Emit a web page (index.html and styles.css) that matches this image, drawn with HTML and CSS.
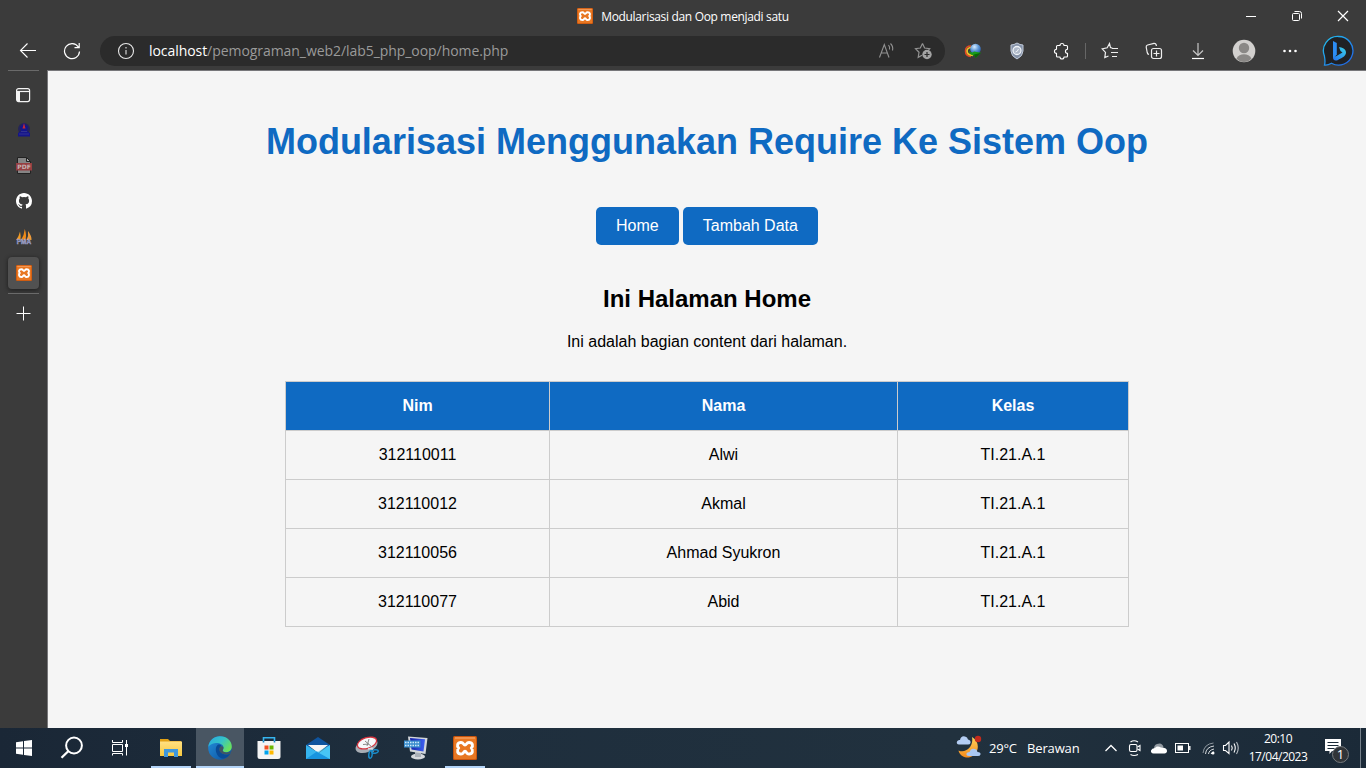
FILE: index.html
```html
<!DOCTYPE html>
<html lang="id">
<head>
<meta charset="utf-8">
<title>Modularisasi dan Oop menjadi satu</title>
<link rel="stylesheet" href="styles.css">
</head>
<body>
<svg width="0" height="0" class="defs">
  <defs>
    <symbol id="xampp" viewBox="0 0 24 24">
      <rect width="24" height="24" rx="1.5" fill="#c9540c"/>
      <rect x="1" y="1" width="22" height="22" rx="1" fill="#e87722"/>
      <rect x="2" y="1.3" width="20" height="1.4" fill="#f5a060"/>
      <path d="M8 6.500C4.200 6.500 3.600 10 5.700 12C3.600 14 4.200 18 8 18C10.800 18 10.300 15.300 12 15.300C13.700 15.300 13.200 18 16 18C19.800 18 20.400 14 18.300 12C20.400 10 19.800 6.500 16 6.500C13.200 6.500 13.700 9 12 9C10.300 9 10.800 6.500 8 6.500Z" fill="none" stroke="#fff" stroke-width="2.900" stroke-linejoin="round"/>
    </symbol>
    <linearGradient id="edgeA" x1="0" y1="0" x2="1" y2="0.6"><stop offset="0" stop-color="#2aa9e0"/><stop offset=".55" stop-color="#35c3c8"/><stop offset="1" stop-color="#6be05a"/></linearGradient>
    <linearGradient id="edgeB" x1="0" y1="0" x2="1" y2="1"><stop offset="0" stop-color="#2490dc"/><stop offset="1" stop-color="#0c4f9c"/></linearGradient>
    <linearGradient id="bing" x1="0" y1="0" x2="1" y2="1"><stop offset="0" stop-color="#22c3ee"/><stop offset="1" stop-color="#2160e8"/></linearGradient>
    <linearGradient id="bingTail" x1="0" y1="1" x2="1" y2="0"><stop offset="0" stop-color="#2470ee"/><stop offset="1" stop-color="#39d3e8"/></linearGradient>
    <linearGradient id="folder" x1="0" y1="0" x2="0" y2="1"><stop offset="0" stop-color="#ffe083"/><stop offset="1" stop-color="#f8c93f"/></linearGradient>
    <linearGradient id="moon" x1="0" y1="0" x2="0" y2="1"><stop offset="0" stop-color="#ffd35c"/><stop offset="1" stop-color="#f38a1c"/></linearGradient>
    <linearGradient id="screen" x1="0" y1="0" x2="1" y2="0"><stop offset="0" stop-color="#1321a8"/><stop offset="1" stop-color="#3f62f0"/></linearGradient>
    <radialGradient id="globe" cx=".4" cy=".3" r=".8"><stop offset="0" stop-color="#d5ecff"/><stop offset=".5" stop-color="#5b95d6"/><stop offset="1" stop-color="#1d4c99"/></radialGradient>
  </defs>
</svg>

<header class="titlebar">
  <div class="caption"><svg width="16" height="16"><use href="#xampp"/></svg><span class="caption-text">Modularisasi dan Oop menjadi satu</span></div>
  <div class="window-controls">
    <span><svg width="12" height="12" fill="none" stroke="#fff"><path d="M1 6.500H11"/></svg></span>
    <span><svg width="12" height="12" fill="none" stroke="#fff"><rect x="1.500" y="3.500" width="7" height="7" rx="1"/><path d="M3.500 1.500H8.500Q10.500 1.500 10.500 3.500V8.500"/></svg></span>
    <span><svg width="12" height="12" fill="none" stroke="#fff" stroke-width="1.200"><path d="M1 1L11 11M11 1L1 11"/></svg></span>
  </div>
</header>

<nav class="toolbar">
  <span class="tool"><svg width="18" height="18" fill="none" stroke="#fff" stroke-width="1.100"><path d="M17 8.500H1.500M8.500 1.500L1.500 8.500L8.500 15.500"/></svg></span>
  <span class="tool"><svg width="18" height="18" fill="none" stroke="#fff" stroke-width="1.200"><path d="M15.300 5A7.500 7.500 0 1 0 16.500 9.500M16.200 1V5.600H11.500"/></svg></span>
  <div class="address">
    <svg width="18" height="18" fill="none" stroke="#e8e8e8"><circle cx="9" cy="9" r="7.500" stroke-width="1.100"/><path d="M9 8V12.500M9 5V6.500" stroke-width="1.600" stroke="#aaa"/></svg>
    <span class="url"><b>localhost</b>/pemograman_web2/lab5_php_oop/home.php</span>
    <svg class="read" width="18" height="18" fill="none" stroke="#929292"><path d="M1.500 15.500L6.300 2.500L11 15.500M3 11H9.500M10.500 3Q12.200 5 11.500 7.500M12.500 1.500Q15.500 4.500 14.500 8.500" stroke-width="1.100"/></svg>
    <svg class="add-star" width="18" height="18"><path d="M8.500 1.500L10.600 6L15.700 6.700L14.500 8M8.500 1.500L6.300 6L1.500 6.700L5 10.300L4.200 15.400L8 13.300" fill="none" stroke="#929292" stroke-width="1.200"/><circle cx="13" cy="12.500" r="4.700" fill="#a3a3a3"/><path d="M13 10V15M10.500 12.500H15.500" stroke="#2b2b2b" stroke-width="1.200"/></svg>
  </div>
  <span class="tool"><svg width="18" height="18"><path d="M7 4Q1.500 4 1.500 9Q1.500 14 7 14.500" fill="none" stroke="#e24a25" stroke-width="1.600"/><path d="M7 5.500Q3 6 3 9Q3 13 9 13.500" fill="none" stroke="#edc52a" stroke-width="1.700"/><circle cx="11.500" cy="7" r="5.300" fill="url(#globe)"/><path d="M4.500 8.500Q8 12 10 9.500L17 10.800L11.500 16L10.500 13.500Q6 13.500 4.500 8.500Z" fill="#199c18"/><path d="M10 12.500L17 10.800L11.500 16Z" fill="#0b620a"/></svg></span>
  <span class="tool"><svg width="16" height="18"><path d="M8 1Q11 3 14 3V9Q14 14 8 17Q2 14 2 9V3Q5 3 8 1Z" fill="#8491a7" stroke="#c1cad9"/><circle cx="8" cy="8.500" r="4" fill="#aeb8c8" stroke="#eef2f7" stroke-width="1.300"/><path d="M6.500 10Q8.500 10 9.500 7" stroke="#eef2f7" fill="none"/></svg></span>
  <span class="tool"><svg width="18" height="18" fill="none" stroke="#fff" stroke-width="1.100"><path d="M5.500 3.500H8A2 2 0 0 1 12 3.500H14.500Q15.500 3.500 15.500 4.500V7.200A2 2 0 0 0 15.500 11.300V14Q15.500 15 14.500 15H12A2 2 0 0 1 8 15H5.500Q4.500 15 4.500 14V11.300A2 2 0 0 1 4.500 7.200V4.500Q4.500 3.500 5.500 3.500Z" stroke-linejoin="round"/></svg></span>
  <span class="divider"></span>
  <span class="tool"><svg width="18" height="18" fill="none" stroke="#eee" stroke-width="1.200"><path d="M11.500 6.200L9.500 5.600L8.500 1.500L6.200 5.800L1.200 6.800L4.500 10.400L3.800 15.600L7.500 14M11 6.500H17M10 10.500H17M11 14.500H16"/></svg></span>
  <span class="tool"><svg width="18" height="18" fill="none" stroke="#eee" stroke-width="1.200"><rect x="6.500" y="6.500" width="10" height="10" rx="2"/><path d="M11.500 8.500V14.500M8.500 11.500H14.500M4 12.500Q2.600 12.200 2.200 10.500L1.200 5.200Q1 3.500 2.600 3L9 1.300Q10.800 1.200 11.300 3V4"/></svg></span>
  <span class="tool"><svg width="14" height="18" fill="none" stroke="#c6c6c6" stroke-width="1.200"><path d="M7 1V13.500M2 8.500L7 13.500L12 8.500"/><path d="M1 16.500H13" stroke="#fff"/></svg></span>
  <span class="tool avatar"><svg width="24" height="24"><circle cx="12" cy="12" r="11.300" fill="#d2d0ce"/><circle cx="12" cy="9" r="5.200" fill="#8a8886"/><path d="M4.500 19.500Q7 15.300 12 15.300Q17 15.300 19.500 19.500Q16.500 23 12 23Q7.500 23 4.500 19.500Z" fill="#8a8886"/></svg></span>
  <span class="tool"><svg width="16" height="6" fill="#fff"><circle cx="2.500" cy="3" r="1.300"/><circle cx="8" cy="3" r="1.300"/><circle cx="13.500" cy="3" r="1.300"/></svg></span>
  <span class="tool bing"><svg width="32" height="32"><path d="M16.500 1.500A14.300 14.300 0 1 1 9.500 28.200Q5.500 30.500 2.500 30Q3.500 27 2.400 21A14.300 14.300 0 0 1 16.500 1.500Z" fill="#202124" stroke="url(#bing)" stroke-width="1.300"/><path d="M11 6L14.800 8V19.500L11 24Z" fill="#2c8df5"/><path d="M11 22Q11 26 14.500 25.500Q16 25.200 22 21.500Q25 18.500 23.500 15.500Q22 12.500 17 12L18.500 16L20.500 17.500L14.500 21Z" fill="url(#bingTail)"/></svg></span>
</nav>

<div class="workspace">
  <aside class="tabs">
    <span class="rule"></span>
    <span class="tab first"><svg width="16" height="16" fill="none" stroke="#f4f4f4" stroke-width="1.200"><rect x="1.600" y="1.600" width="13" height="13" rx="2"/><path d="M2 4.500H14.500"/><path d="M3.500 5V14" stroke-width="3"/></svg></span>
    <span class="tab crest"><svg width="16" height="16"><circle cx="8" cy="8" r="6" fill="#252558"/><path d="M8 2L12 6L11 10L14 12V15.500H2V12L5 10L4 6Z" fill="#15158a"/><path d="M8 2L9.500 7.500H6.500Z" fill="#c62a32"/><path d="M3 13H13M5 10.500H11" stroke="#33338f"/></svg></span>
    <span class="tab pdf"><svg width="16" height="17"><path d="M1.500 .5H10.500L14.500 4.500V16.500H1.500Z" fill="#858585" stroke="#222"/><path d="M10.500 .5V4.500H14.500Z" fill="#aaa" stroke="#222"/><rect y="6" width="16" height="7.500" fill="#963f42"/><text x="8" y="11.900" text-anchor="middle" class="pdf-label">PDF</text></svg></span>
    <span class="tab"><svg width="16" height="16" viewBox="0 0 16 16"><path fill="#fff" d="M8 0C3.580 0 0 3.580 0 8c0 3.540 2.290 6.530 5.470 7.590.4.070.55-.17.55-.38v-1.340c-2.230.48-2.700-1.070-2.700-1.070-.36-.92-.89-1.170-.89-1.170-.73-.5.050-.49.050-.49.810.06 1.230.83 1.230.83.720 1.230 1.880.87 2.340.67.070-.52.280-.88.510-1.080-1.780-.2-3.640-.89-3.640-3.950 0-.87.310-1.590.82-2.150-.08-.2-.36-1.020.08-2.120 0 0 .67-.21 2.200.82a7.600 7.600 0 0 1 4 0c1.530-1.040 2.200-.82 2.200-.82.440 1.100.16 1.920.08 2.120.51.560.82 1.270.82 2.150 0 3.070-1.870 3.750-3.650 3.950.29.250.54.730.54 1.480v2.200c0 .21.150.46.550.38A8 8 0 0 0 16 8c0-4.420-3.580-8-8-8z"/></svg></span>
    <span class="tab"><svg width="18" height="18"><path d="M5 3.500Q6 8 5.500 12H1.200Q4 8 5 3.500Z" fill="#f29a22"/><path d="M9.800 1Q11.800 7 10.500 12H6Q9.300 7 9.800 1Z" fill="#f08b18"/><path d="M13 3Q16.800 8 16.500 12H11.500Q13.800 8 13 3Z" fill="#ef9b3a"/><text x="9" y="16.300" text-anchor="middle" class="pma-label">PMA</text></svg></span>
    <span class="tab"><span class="active-tab"><svg width="16" height="16"><use href="#xampp"/></svg></span></span>
    <span class="rule lower"></span>
    <span class="new-tab"><svg width="16" height="16" stroke="#fff"><path d="M7.500 .5V14.500M.5 7.500H14.500"/></svg></span>
  </aside>

  <main class="page">
    <h1>Modularisasi Menggunakan Require Ke Sistem Oop</h1>
    <div class="menu"><a class="button">Home</a><a class="button">Tambah Data</a></div>
    <h2>Ini Halaman Home</h2>
    <p>Ini adalah bagian content dari halaman.</p>
    <table>
      <colgroup><col class="nim"><col class="nama"><col class="kelas"></colgroup>
      <thead><tr><th>Nim</th><th>Nama</th><th>Kelas</th></tr></thead>
      <tbody>
        <tr><td>312110011</td><td>Alwi</td><td>TI.21.A.1</td></tr>
        <tr><td>312110012</td><td>Akmal</td><td>TI.21.A.1</td></tr>
        <tr><td>312110056</td><td>Ahmad Syukron</td><td>TI.21.A.1</td></tr>
        <tr><td>312110077</td><td>Abid</td><td>TI.21.A.1</td></tr>
      </tbody>
    </table>
  </main>
</div>

<footer class="taskbar">
  <span class="task"><svg width="16" height="16" fill="#fff"><path d="M0 2.300L7 1.300V7.500H0ZM8 1.100L16 0V7.500H8ZM0 8.500H7V14.700L0 13.700ZM8 8.500H16V16L8 14.900Z"/></svg></span>
  <span class="task"><svg width="24" height="24" fill="none" stroke="#fff" stroke-width="2"><circle cx="14" cy="9.500" r="7.900"/><path d="M8.500 15L1.500 21.800" stroke-width="2.300"/></svg></span>
  <span class="task"><svg width="18" height="16" fill="none" stroke="#fff"><path d="M1.500 0V2.500H11.500V0M1.500 15.500V13.500H11.500V15.500M1.500 4.500H11.500V11.500H1.500ZM15.500 0V15.500"/><rect x="14" y="4" width="3" height="3" fill="#fff" stroke="none"/></svg></span>
  <span class="task explorer"><svg width="24" height="20"><path d="M1 1H9L11 3H22V10H1Z" fill="#e2a115"/><path d="M1 3.500H23V18H1Z" fill="url(#folder)"/><path d="M5 11H19V19H15V14.500H9V19H5Z" fill="#3f97dc"/></svg></span>
  <span class="task focused"><svg width="24" height="24"><circle cx="12" cy="12" r="11.800" fill="url(#edgeB)"/><path d="M.3 11C1 4 6.500 .2 12 .2C19 .2 24 5 23.800 11C23.500 16 18 17.500 15 15.500C14 14.500 15.500 13.500 15.500 11.500C15.500 8.500 11.500 6.800 8 7C4 7.300 1 9.500 .3 11Z" fill="url(#edgeA)"/><path d="M9.500 9C6 12 8 21 14 22.500C17.500 23 21 20 22 17.800C18.500 20 13.500 18.500 11.800 15C10.800 13 11.500 11 13.500 10C12.500 8.600 11 8.200 9.500 9Z" fill="#0a4b96"/><path d="M12 11C13.500 9.500 16 10.500 15.400 12.500C15 14 14 14.500 15.200 15.600C18 17.500 21 16.500 22.500 15.500V17.500C17 20 12 17 11.400 14.500C11.200 13 11.400 12 12 11Z" fill="#405563"/></svg></span>
  <span class="task"><svg width="24" height="24"><path d="M6.500 6V1.700H17.500V6" fill="none" stroke="#36b5ef" stroke-width="1.600"/><path d="M.5 5H23.500V20.500Q23.500 23 21 23H3Q.5 23 .5 20.500Z" fill="#f4f4f4"/><path d="M6.500 5V6.500M17.500 5V6.500" stroke="#1688c6" stroke-width="1.600"/><path d="M7.500 9.500H11.500V13.500H7.500Z" fill="#f25022"/><path d="M12.500 9.500H16.500V13.500H12.500Z" fill="#6bb700"/><path d="M7.500 14.500H11.500V18.500H7.500Z" fill="#00a4ef"/><path d="M12.500 14.500H16.500V18.500H12.500Z" fill="#ffb900"/></svg></span>
  <span class="task"><svg width="24" height="24"><path d="M0 9L12 1L24 9V12H0Z" fill="#0f549e"/><path d="M2 9H22L12 17Z" fill="#f6f6f6"/><path d="M0 9L13 17L24 9V23H0Z" fill="#36b4ee"/><path d="M0 23L11 15.500L24 23Z" fill="#1894df"/><path d="M24 9V23L11 16Z" fill="#53d1f8" opacity=".6"/></svg></span>
  <span class="task"><svg width="24" height="24"><ellipse cx="11.500" cy="9.500" rx="11.500" ry="6.500" transform="rotate(-22 12 9.500)" fill="#a8adb4"/><ellipse cx="12" cy="7" rx="10" ry="5.300" transform="rotate(-18 12 7)" fill="#f6f8fa" stroke="#d6323e" stroke-width="1.300"/><path d="M14 3L12 10M8 8.500L14 8M10 5L17 11" stroke="#888" fill="none"/><path d="M13 13L17 12L18 16" stroke="#d6dde4" stroke-width="1.300" fill="none"/><g fill="none" stroke="#198ac8" stroke-width="1.500"><ellipse cx="15.500" cy="18.500" rx="1.700" ry="3.700" transform="rotate(8 15.500 18.500)"/><ellipse cx="20" cy="15.500" rx="3.300" ry="1.700" transform="rotate(-10 20 15.500)"/></g></svg></span>
  <span class="task"><svg width="24" height="24"><ellipse cx="14" cy="20.500" rx="7" ry="3" fill="#d5d8dc"/><path d="M11 16H17V21H11Z" fill="#aab0b8"/><path d="M4 .5L23.500 2L21.500 18L6 15.500Z" fill="#d2d6da"/><path d="M6 2L21 3.300L19.500 15.500L7.500 13.500Z" fill="url(#screen)"/><path d="M0 4.500H16.500V11.500H0Z" fill="#398ccc"/><path d="M1 6.500H15.500M1 9.500H15.500" stroke="#cfe9fb" stroke-width="1.400" stroke-dasharray="1.500 1"/></svg></span>
  <span class="task explorer"><svg width="24" height="24"><use href="#xampp"/></svg></span>

  <div class="weather">
    <svg width="26" height="24"><path d="M16 2C27 9 21 23 10 22.500C5 21.500 3 18 2.500 15.500C10 19 18 11 16 2Z" fill="url(#moon)"/><path d="M3 9.500Q0 9 1 6.500Q2 4.500 4 5Q5 .5 9 1.500Q11.500 2 12 4.500Q15 5 14.500 8Q14 9.500 12 9.500Z" fill="#b4cdf3"/><path d="M13 21Q10 21 10.500 18.500Q11 17 13.500 17Q15 12.500 19 14Q21 14.500 21.500 17Q25 17 24.500 19.500Q24 21 22 21Z" fill="#a9c7f3"/><circle cx="22" cy="4" r="3.200" fill="#c42b1c"/></svg>
    <span class="temp">29°C</span><span class="sky">Berawan</span>
  </div>
  <div class="tray">
    <span><svg width="14" height="10" fill="none" stroke="#fff" stroke-width="1.300"><path d="M1.500 8L7 2.500L12.500 8"/></svg></span>
    <span><svg width="14" height="18" fill="none" stroke="#fff" stroke-width="1.100"><rect x="1.500" y="5.500" width="7.500" height="7" rx="1.500"/><path d="M9.500 8L12 6.500V11.500L9.500 10M2.500 3Q6 .5 10 3M2.500 15.500Q6 17.500 10 15.500"/></svg></span>
    <span><svg width="18" height="14"><path d="M4 9Q3.500 4 7 3Q12 1 13.500 6L10 9Z" fill="#929aa1"/><path d="M3.500 12.500Q.5 12 1 9.500Q1.800 7 5 7Q7 4.500 11 6.500Q17.500 6.500 17 10.500Q16.500 12.500 14.500 12.500Z" fill="#fff"/></svg></span>
    <span><svg width="16" height="10"><rect x=".5" y=".5" width="13" height="9" fill="none" stroke="#fff"/><rect x="2.500" y="2.500" width="5.500" height="5" fill="#fff"/><path d="M14.800 3V7" stroke="#fff" stroke-width="1.400"/></svg></span>
    <span class="wifi"><svg width="14" height="14" fill="none" stroke="#d6dadd"><path d="M1 12Q2 3 11.500 2" stroke="#8d969e"/><path d="M3.500 13Q4 6 12 5M6.500 13Q7 9 12 8"/><path d="M9 13Q9.500 11.500 12 11" stroke="#fff"/><circle cx="11" cy="12" r="1.500" fill="#fff" stroke="none"/></svg></span>
    <span><svg width="18" height="16" fill="none" stroke="#fff" stroke-width="1.100"><path d="M1.500 5.500H3.500L7 2V13.500L3.500 10.500H1.500Z"/><path d="M9.500 5.500Q11 8 9.500 10.500M12 3.500Q14.500 8 12 12.500"/><path d="M14.500 2Q18 8 14.500 14" stroke="#b5bcc2"/></svg></span>
  </div>
  <div class="clock"><span>20:10</span><span class="date">17/04/2023</span></div>
  <div class="notice"><svg width="28" height="28"><path d="M2 3H18V15H9L6.500 18V15H2Z" fill="#fff"/><path d="M4.500 6.500H15.500M4.500 9.500H15.500M4.500 12.500H11.500" stroke="#1b2a38"/><circle cx="17.500" cy="18.500" r="8" fill="#303438" stroke="#767a7e"/><text x="17.500" y="23" text-anchor="middle" class="count">1</text></svg></div>
</footer>
</body>
</html>
```
FILE: styles.css
```css
* { box-sizing: border-box; }
body {
  margin: 0;
  width: 1366px;
  height: 768px;
  overflow: hidden;
  display: flex;
  flex-direction: column;
  background: #3b3b3b;
  font-family: "Open Sans", "Noto Sans", sans-serif;
}
svg { display: block; flex: none; }
.defs { position: absolute; }

.titlebar { flex: none; height: 32px; display: grid; grid-template-columns: 138px 1fr 138px; }
.caption { grid-column: 2; display: flex; align-items: center; justify-content: center; gap: 8px; }
.caption-text { padding-top: 1px; color: #fff; font-size: 12px; line-height: 16px; white-space: nowrap; letter-spacing: -0.33px; }
.window-controls { display: flex; }
.window-controls span { width: 46px; display: grid; place-items: center; }

.toolbar { flex: none; height: 38px; padding: 0 2px 0 6px; display: flex; align-items: center; }
.tool { flex: none; width: 44px; height: 38px; display: grid; place-items: center; }
.avatar { width: 48px; }
.bing { width: 52px; }
.divider { width: 1px; height: 16px; margin: 0 2px; background: #666; }
.address {
  width: 845px;
  height: 30px;
  margin: 0 6px;
  padding: 0 13px 0 17px;
  border-radius: 15px;
  background: #2b2b2b;
  display: flex;
  align-items: center;
}
.url { flex: 1; margin-left: 14px; font-size: 14px; line-height: 18px; color: #9a9a9a; letter-spacing: -0.06px; white-space: nowrap; }
.url b { color: #fff; font-weight: 400; }
.add-star { margin-left: 18px; }

.workspace { flex: 1; min-height: 0; display: flex; }
.tabs { flex: none; width: 47px; display: flex; flex-direction: column; align-items: center; }
.rule { width: 31px; height: 1px; flex: none; background: #6a6a6a; }
.tab { flex: none; width: 47px; height: 36px; display: grid; place-items: center; }
.first { height: 34px; margin-top: 7px; padding-right: 2px; }
.crest { padding-bottom: 2px; }
.pdf { height: 35px; }
.active-tab { width: 31px; height: 32px; border-radius: 4px; background: #515151; box-shadow: 0 1px 4px #1c1c1c; display: grid; place-items: center; }
.lower { margin-top: 2px; }
.new-tab { margin-top: 12px; }
.pdf-label { font: bold 6px "DejaVu Sans", sans-serif; fill: #c5b5b5; }
.pma-label { font: bold 6.5px "Liberation Sans", sans-serif; fill: #777bb0; stroke: #a7aacb; stroke-width: 0.4px; }

.page {
  flex: 1;
  border-top: 1px solid #77777a;
  border-left: 1px solid #77777a;
  background: #f5f5f5;
  color: #000;
  font: 16px/18px "Liberation Sans", Arial, sans-serif;
  text-align: center;
}
h1 { margin: 50px 0 0; font-size: 36px; line-height: 41px; color: #0f6ac2; }
.menu { display: flex; justify-content: center; gap: 4px; margin-top: 45px; }
.button { padding: 10px 20px; border-radius: 5px; background: #0f6ac2; color: #fff; }
h2 { margin: 40px 0 0; font-size: 24px; line-height: 28px; }
p { margin: 20px 0 0; }
table { width: 844px; margin: 30px auto 0; border-collapse: collapse; table-layout: fixed; }
.nim { width: 264px; }
.nama { width: 348px; }
.kelas { width: 231px; }
th, td { height: 49px; padding: 15px; border: 1px solid #ccc; }
th { background: #0f6ac2; color: #fff; }

.taskbar { flex: none; height: 40px; display: flex; background: linear-gradient(90deg, #1a2736, #1e2e3d 30%, #21313e 70%, #1b2a38); color: #fff; }
.task { flex: none; width: 48px; height: 40px; display: grid; place-items: center; }
.task + .task + .task + .task { margin-left: 1px; }
.task + .task + .task + .explorer { background: linear-gradient(#b3d4f8, #b3d4f8) center bottom / 40px 2px no-repeat; }
.task:nth-child(4) { margin-left: 3px !important; }
.focused { background: #495663; box-shadow: inset 0 -2px #b3d4f8; }
.weather { margin-left: auto; display: flex; align-items: center; width: 143px; font-size: 13px; white-space: nowrap; }
.weather svg { margin-top: -3px; }
.temp { margin-left: 7px; width: 38px; letter-spacing: -0.2px; }
.sky { letter-spacing: -0.15px; }
.tray { display: flex; width: 144px; }
.tray span { width: 24px; display: grid; place-items: center; }
.wifi { padding-left: 3px; }
.clock { width: 70px; display: flex; flex-direction: column; align-items: center; padding-top: 2px; font-size: 12px; line-height: 18px; }
.clock span { letter-spacing: -0.5px; }
.notice { width: 48px; padding: 8px 0 0 10px; margin-right: 5px; border-right: 1px solid #75808a; }
.count { font: 13px "Open Sans", sans-serif; fill: #fff; }
```
